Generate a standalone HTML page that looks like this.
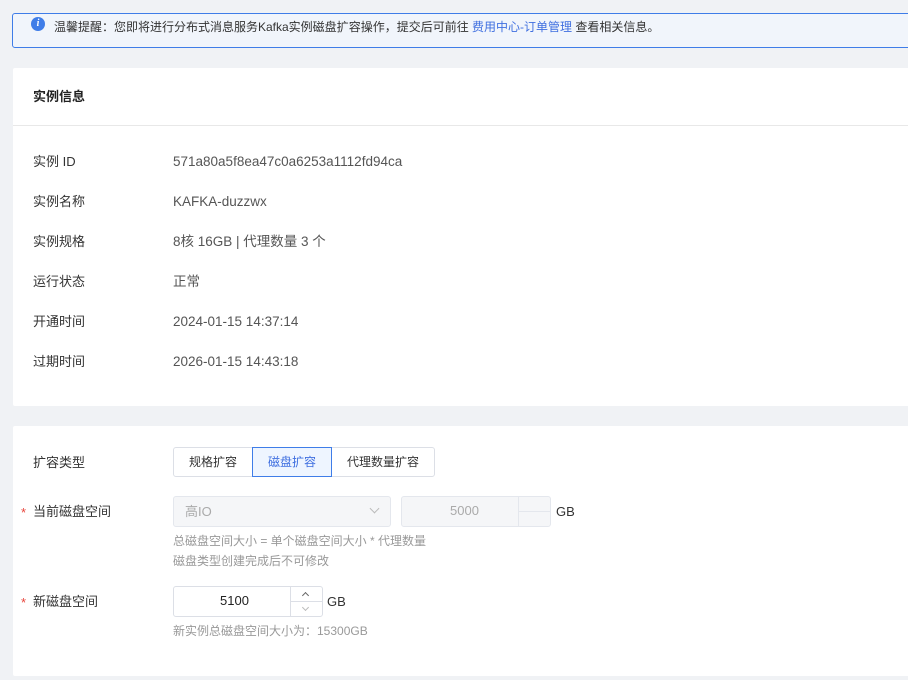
<!DOCTYPE html><html><head><meta charset="utf-8"><style>
*{box-sizing:border-box;margin:0;padding:0}
body{width:908px;height:680px;background:#f0f2f5;font-family:"Liberation Sans","Noto Sans CJK SC",sans-serif;font-size:13px;color:#333;position:relative;overflow:hidden}
.a{position:absolute;line-height:18px}
.alert{left:12px;top:13px;width:910px;height:35px;border:1px solid #3f7de8;border-radius:3px;background:#f1f5fb}
.card{left:13px;width:900px;background:#fff;border-radius:2px}
.lbl{left:33px;color:#333}
.val{left:173px;color:#555;font-size:13.5px}
.star{color:#e8453c;left:21px}
.box{border:1px solid #dcdfe6;border-radius:3px;background:#fff}
.dis{background:#f5f6f8;border-color:#e4e7ed;color:#aaa}
.hint{left:173px;color:#999;font-size:12px}
</style></head><body>
<div class="a alert"></div>
<div class="a" style="left:31px;top:17px;width:14px;height:14px;border-radius:50%;background:#3f7de8;color:#fff;font:italic bold 10px/14px 'Liberation Serif',serif;text-align:center">i</div>
<div class="a" style="left:54px;top:18px;font-size:12px;color:#333">温馨提醒：您即将进行分布式消息服务Kafka实例磁盘扩容操作，提交后可前往 <span style="color:#3f6fe0">费用中心-订单管理</span> 查看相关信息。</div>

<div class="a card" style="top:68px;height:338px"></div>
<div class="a" style="left:13px;top:125px;width:900px;height:1px;background:#e8e8e8"></div>
<div class="a" style="left:33px;top:88px;font-weight:bold;font-size:13px;color:#222">实例信息</div>
<div class="a lbl" style="top:153px">实例 ID</div><div class="a val" style="top:153px">571a80a5f8ea47c0a6253a1112fd94ca</div>
<div class="a lbl" style="top:193px">实例名称</div><div class="a val" style="top:193px">KAFKA-duzzwx</div>
<div class="a lbl" style="top:233px">实例规格</div><div class="a val" style="top:233px">8核 16GB | 代理数量 3 个</div>
<div class="a lbl" style="top:273px">运行状态</div><div class="a val" style="top:273px">正常</div>
<div class="a lbl" style="top:313px">开通时间</div><div class="a val" style="top:313px">2024-01-15 14:37:14</div>
<div class="a lbl" style="top:353px">过期时间</div><div class="a val" style="top:353px">2026-01-15 14:43:18</div>

<div class="a card" style="top:426px;height:250px"></div>
<div class="a lbl" style="top:454px">扩容类型</div>
<div class="a box" style="left:173px;top:447px;width:262px;height:30px"></div>
<div class="a" style="left:189px;top:453px;font-size:12px">规格扩容</div>
<div class="a" style="left:252px;top:447px;width:80px;height:30px;border:1px solid #3f7de8;background:#eef5ff;color:#3f6fe0;font-size:12px;text-align:center;line-height:28px">磁盘扩容</div>
<div class="a" style="left:347px;top:453px;font-size:12px">代理数量扩容</div>

<div class="a star" style="top:504px">*</div><div class="a lbl" style="top:503px">当前磁盘空间</div>
<div class="a box dis" style="left:173px;top:496px;width:218px;height:31px"></div>
<div class="a" style="left:185px;top:503px;color:#aaa">高IO</div>
<div class="a" style="left:371px;top:505px;width:7px;height:7px;border-right:1px solid #bbb;border-bottom:1px solid #bbb;transform:rotate(45deg)"></div>
<div class="a box dis" style="left:401px;top:496px;width:150px;height:31px"></div>
<div class="a" style="left:518px;top:497px;width:1px;height:29px;background:#e4e7ed"></div>
<div class="a" style="left:518px;top:511px;width:32px;height:1px;background:#e4e7ed"></div>
<div class="a" style="left:450px;top:502px;color:#aaa">5000</div>
<div class="a" style="left:556px;top:503px">GB</div>
<div class="a hint" style="top:532px">总磁盘空间大小 = 单个磁盘空间大小 * 代理数量</div>
<div class="a hint" style="top:552px">磁盘类型创建完成后不可修改</div>

<div class="a star" style="top:594px">*</div><div class="a lbl" style="top:593px">新磁盘空间</div>
<div class="a box" style="left:173px;top:586px;width:150px;height:31px"></div>
<div class="a" style="left:290px;top:587px;width:1px;height:29px;background:#dcdfe6"></div>
<div class="a" style="left:290px;top:601px;width:32px;height:1px;background:#dcdfe6"></div>
<div class="a" style="left:303px;top:593px;width:5px;height:5px;border-left:1px solid #666;border-top:1px solid #666;transform:rotate(45deg)"></div>
<div class="a" style="left:303px;top:605px;width:5px;height:5px;border-right:1px solid #bbb;border-bottom:1px solid #bbb;transform:rotate(45deg)"></div>
<div class="a" style="left:220px;top:592px;color:#222">5100</div>
<div class="a" style="left:327px;top:593px">GB</div>
<div class="a hint" style="top:622px">新实例总磁盘空间大小为：15300GB</div>
</body></html>
